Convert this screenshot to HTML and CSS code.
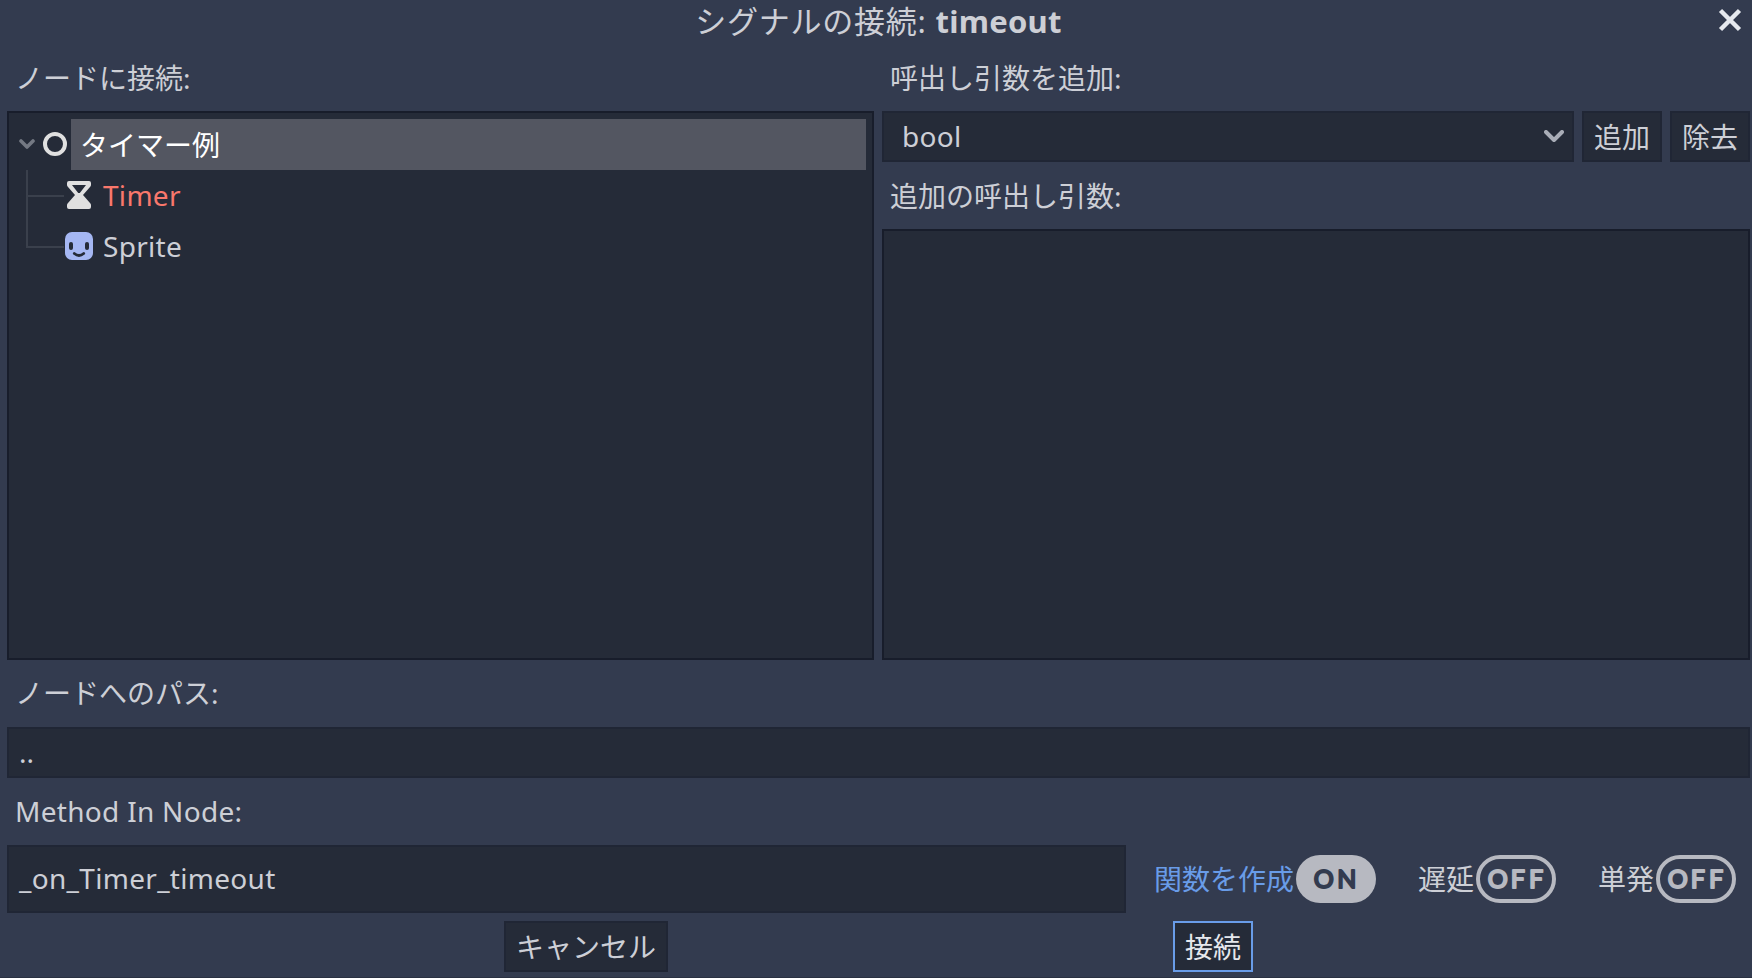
FILE: index.html
```html
<!DOCTYPE html>
<html lang="ja">
<head>
<meta charset="utf-8">
<title>シグナルの接続</title>
<link rel="stylesheet" href="styles.css">
</head>
<body>
<div class="dialog">
  <header class="titlebar">
    <h1 class="title">シグナルの接続: <b>timeout</b></h1>
    <svg class="close" width="24" height="24" viewBox="0 0 24 24"><path d="M2.5 2.5L21.5 21.5M21.5 2.5L2.5 21.5"/></svg>
  </header>
  <main class="columns">
    <section class="column">
      <div class="label">ノードに接続:</div>
      <div class="panel tree">
        <div class="row root">
          <svg class="arrow" width="16" height="11" viewBox="0 0 16 11"><path d="M2 2L8 8L14 2"/></svg>
          <svg class="node-icon" width="24" height="24" viewBox="0 0 24 24"><circle cx="12" cy="12" r="10"/></svg>
          <span class="selected">タイマー例</span>
        </div>
        <div class="row child">
          <svg class="timer-icon" width="28" height="28" viewBox="0 0 28 28"><path fill-rule="evenodd" d="M4 0H24Q26 0 26 2V4Q26 5 25 6L18 14L25 22Q26 23 26 24V26Q26 28 24 28H4Q2 28 2 26V24Q2 23 3 22L10 14L3 6Q2 5 2 4V2Q2 0 4 0ZM7 4L13.2 12H14.8L21 4Z"/></svg>
          <span class="name timer latin">Timer</span>
        </div>
        <div class="row child last">
          <svg width="28" height="28" viewBox="0 0 28 28"><rect width="28" height="28" rx="7" fill="#a5b7f3"/><g fill="#252b38"><rect x="4" y="10" width="4" height="8" rx="2"/><rect x="20" y="10" width="4" height="8" rx="2"/></g><path d="M9.3 21.5Q14 25.5 18.7 21.5" fill="none" stroke="#252b38" stroke-width="2.8" stroke-linecap="round"/></svg>
          <span class="name latin">Sprite</span>
        </div>
      </div>
    </section>
    <section class="column">
      <div class="label">呼出し引数を追加:</div>
      <div class="binds">
        <div class="field select latin"><span>bool</span><svg class="arrow light" width="20" height="13" viewBox="0 0 20 13"><path d="M2 2L10 10L18 2"/></svg></div>
        <button class="button small">追加</button>
        <button class="button small">除去</button>
      </div>
      <div class="label second">追加の呼出し引数:</div>
      <div class="panel"></div>
    </section>
  </main>
  <div class="label">ノードへのパス:</div>
  <div class="field path">..</div>
  <div class="label latin">Method In Node:</div>
  <div class="method-row">
    <div class="field method latin">_on_Timer_timeout</div>
    <div class="toggles">
      <div class="toggle checked"><span>関数を作成</span>
        <svg width="80" height="48" viewBox="0 0 80 48"><rect width="80" height="48" rx="24"/><text y="33"><tspan x="17.8">O</tspan><tspan x="41.2">N</tspan></text></svg></div>
      <div class="toggle"><span>遅延</span>
        <svg width="80" height="48" viewBox="0 0 80 48"><rect x="2" y="2" width="76" height="44" rx="22"/><text y="33"><tspan x="11.8">O</tspan><tspan x="34.8">F</tspan><tspan x="52.9">F</tspan></text></svg></div>
      <div class="toggle"><span>単発</span>
        <svg width="80" height="48" viewBox="0 0 80 48"><rect x="2" y="2" width="76" height="44" rx="22"/><text y="33"><tspan x="11.8">O</tspan><tspan x="34.8">F</tspan><tspan x="52.9">F</tspan></text></svg></div>
    </div>
  </div>
  <footer class="actions">
    <button class="button cancel">キャンセル</button>
    <button class="button small focused">接続</button>
  </footer>
</div>
</body>
</html>
```
FILE: styles.css
```css
* { box-sizing: border-box; }
body {
  margin: 0;
  background: #333b4f;
  color: #cdcfd6;
  font: 28px/38px "Noto Sans", "Noto Sans CJK JP", sans-serif;
}
.dialog {
  height: 978px;
  padding: 0 2px 0 7px;
  display: flex;
  flex-direction: column;
  overflow: hidden;
  border-bottom: 1px solid #2a3142;
}
.titlebar {
  height: 45px;
  flex: none;
  display: grid;
  grid-template-columns: 24px 1fr 24px;
  padding-right: 8px;
}
.title {
  grid-column: 2;
  margin: 0;
  padding-left: 8px;
  text-align: center;
  font-size: 31px;
  font-weight: 400;
  line-height: 42px;
  letter-spacing: 0.75px;
}
.title b { font-weight: 700; letter-spacing: 0.25px; }
.latin { letter-spacing: 0.3px; }
.close { margin-top: 8px; fill: none; stroke: #e6e9ef; stroke-width: 4.5; }
.columns { height: 615px; flex: none; display: grid; grid-template-columns: 867px 868px; gap: 8px; }
.column { display: flex; flex-direction: column; min-width: 0; }
.label { height: 67px; flex: none; padding: 14px 8px 0 8px; white-space: nowrap; }
.column > .label:first-child { height: 66px; }
.label.second { padding-top: 15px; }
.panel { flex: 1; background: #252b38; border: 2px solid #181d2b; }
.tree { padding: 6px; }
.row { display: flex; align-items: center; height: 51px; }
.root { padding-left: 4px; }
.arrow { fill: none; stroke: #747983; stroke-width: 3.6; stroke-linecap: round; stroke-linejoin: round; }
.arrow.light { stroke: #a9adb7; stroke-width: 4; }
.node-icon { margin-left: 8px; fill: none; stroke: #e0e0e0; stroke-width: 4; }
.root .node-icon { margin-bottom: 1px; }
.selected { flex: 1; height: 51px; margin-left: 4px; padding-left: 9px; line-height: 53px; background: #535661; color: #fff; }
.child { margin-left: 11px; padding: 0 0 2px 39px; position: relative; }
.child svg { margin-top: 1px; }
.child::before {
  content: "";
  position: absolute;
  left: 4px;
  left: 0;
  top: 0;
  width: 37px;
  height: 26px;
  border-left: 2px solid #3a404c;
  border-bottom: 2px solid #3a404c;
}
.child::before { width: 36px; height: 25px; }
.child.last::before { top: -26px; height: 51px; }
.timer-icon { fill: #e0e0e0; }
.name { margin-left: 10px; }
.timer { color: #f9786c; }
.binds { display: flex; gap: 8px; height: 51px; }
.field { background: #252b38; border: 2px solid #202635; padding: 0 0 2px 10px; display: flex; align-items: center; white-space: pre; }
.select { flex: 1; justify-content: space-between; padding: 0 8px 1px 18px; }
.button { height: 51px; margin: 0; padding: 0; border: 2px solid #202635; background: #252b38; color: inherit; font: inherit; }
.small { width: 80px; }
.path { height: 51px; flex: none; }
.method-row { height: 68px; flex: none; display: flex; justify-content: space-between; }
.method { width: 1119px; }
.toggles { display: flex; align-items: center; gap: 42px; padding-right: 14px; }
.toggle { display: flex; align-items: center; gap: 2px; }
.toggle svg { display: block; }
.toggle rect { fill: none; stroke: #b7b9c1; stroke-width: 4; }
.toggle text { font: 400 25px "Lato", sans-serif; fill: #b7b9c1; stroke: #b7b9c1; stroke-width: 2; stroke-linejoin: round; }
.checked { color: #699ce8; }
.checked rect { fill: #b7b9c1; stroke: none; }
.checked text { fill: #333b4f; stroke: #333b4f; }
.actions { display: flex; gap: 505px; padding: 8px 0 0 497px; }
.cancel { width: 164px; }
.focused { border-color: #699ce8; color: #e6e8ed; }
```
